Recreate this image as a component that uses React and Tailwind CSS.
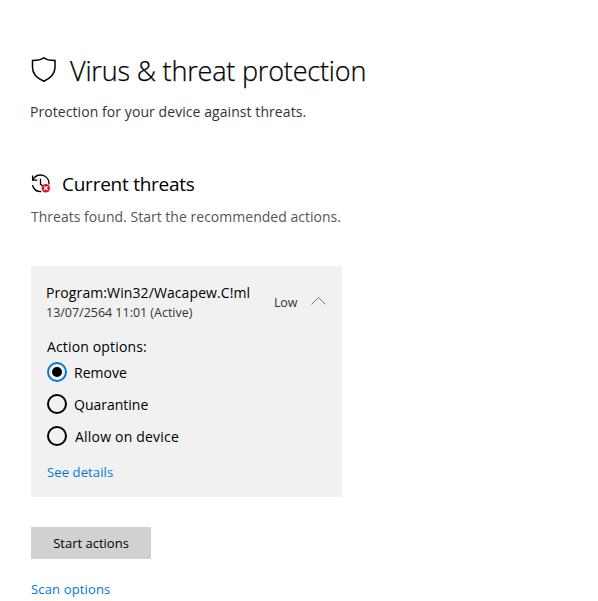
import React, { useState } from 'react';

const options = [
  { id: 'remove', label: 'Remove', className: 'mt-0.5 ml-[7px]' },
  { id: 'quarantine', label: 'Quarantine', className: 'mt-0.5 ml-[7px]' },
  { id: 'allow', label: 'Allow on device', className: 'mt-0.5 ml-2 tracking-[0.2px]' },
];

const ShieldIcon = () => (
  <svg width="26" height="28" viewBox="0 0 26 28" fill="none" stroke="#000" strokeWidth="1.5" className="mt-1.5 shrink-0">
    <path d="M12.800 1.800C10.300 3.900 6 4.500 1.500 4.500V11.500C1.500 18.300 6.200 22.300 12.800 25.200C19.300 22.300 24 18.300 24 11.500V4.500C19.600 4.500 15.300 3.900 12.800 1.800Z" />
  </svg>
);

const HistoryIcon = () => (
  <svg width="20" height="20" viewBox="0 0 20 20" fill="none" className="shrink-0">
    <path d="M1.600 1.500V6.200H6.300" stroke="#000" strokeWidth="1.300" />
    <path d="M1.900 6C3.300 2.900 6.200 1 9.600 1C14.300 1 18 4.600 18 9.200V10.500M1.400 11C2.300 14.800 5.700 17.600 10.200 17.600" stroke="#000" strokeWidth="1.300" />
    <path d="M9.500 4.800V10.100L12 12.300" stroke="#000" strokeWidth="1.300" />
    <circle cx="14.800" cy="14.200" r="4.200" fill="#e81123" />
    <path d="M13 12.400L16.600 16M16.600 12.400L13 16" stroke="#fff" strokeWidth="1.300" />
  </svg>
);

const App = () => {
  const [selected, setSelected] = useState('remove');

  return (
    <div className="h-[601px] w-[598px] overflow-hidden bg-white pl-[31px] font-['Open_Sans',sans-serif] text-sm leading-5 whitespace-nowrap text-black">
      {/* Page header */}
      <div className="flex items-start pt-[50px]">
        <ShieldIcon />
        <h1 className="ml-[13px] text-[27px] leading-[42px] font-light tracking-[-0.18px] [-webkit-text-stroke:0.25px_black]">Virus &amp; threat protection</h1>
      </div>
      <p className="mt-[10px] -ml-px tracking-[0.07px] text-[#333]">Protection for your device against threats.</p>

      {/* Current threats */}
      <div className="mt-12 flex items-center">
        <HistoryIcon />
        <h2 className="ml-[11px] text-[19px] leading-7 tracking-[-0.25px]">Current threats</h2>
      </div>
      <p className="mt-[9px] tracking-[0.02px] text-[#555]">Threats found. Start the recommended actions.</p>

      <div className="mt-[39px] h-[231px] w-[311px] bg-[#f1f1f1] pt-[17px] pl-[15px]">
        <div className="flex">
          <div className="w-[228px]">
            <p className="tracking-[0.1px]">Program:Win32/Wacapew.C!ml</p>
            <p className="text-[12.5px] leading-5 tracking-[-0.02px] text-[#333]">13/07/2564 11:01 (Active)</p>
          </div>
          <span className="mt-[10px] w-9 text-[12.5px] leading-5 tracking-[-0.2px] text-[#333]">Low</span>
          <svg width="18" height="12" viewBox="0 0 18 12" fill="none" stroke="#777" className="mt-3">
            <path d="M1.500 9.500L8.500 2.500L15.500 9.500" />
          </svg>
        </div>

        <p className="mt-[14px] -mb-px ml-px tracking-[0.15px]">Action options:</p>
        <div className="ml-px">
          {options.map((option) => (
            <button key={option.id} onClick={() => setSelected(option.id)} className="flex h-8 items-center">
              <span
                className={`flex size-5 items-center justify-center rounded-full border-2 ${
                  selected === option.id ? 'border-[#0078d7]' : 'border-black'
                }`}
              >
                {selected === option.id && <span className="size-[10px] rounded-full bg-black" />}
              </span>
              <span className={option.className}>{option.label}</span>
            </button>
          ))}
        </div>
        <a href="#details" className="mt-[10px] ml-px block text-[13px] leading-5 tracking-[0.12px] text-[#0078d7]">See details</a>
      </div>

      <button className="mt-[30px] block h-8 w-[120px] bg-[#d1d1d1] text-[13px]">Start actions</button>
      <a href="#scan" className="mt-5 block text-[13px] leading-5 tracking-[0.15px] text-[#0078d7]">Scan options</a>
    </div>
  );
};

export default App;
